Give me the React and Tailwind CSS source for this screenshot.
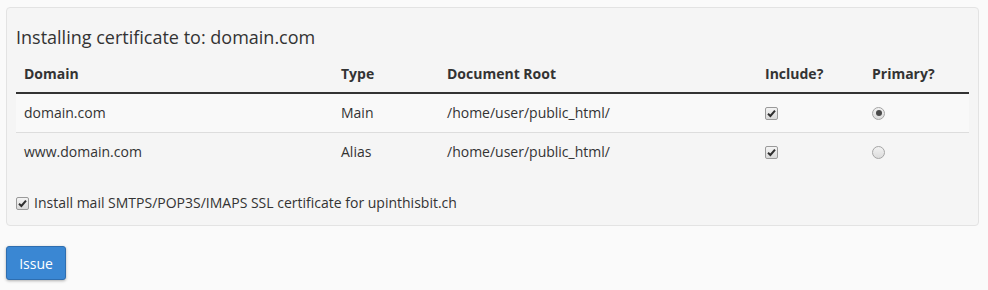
import React from 'react';

const rows = [
  { domain: 'domain.com', type: 'Main', root: '/home/user/public_html/', primary: true },
  { domain: 'www.domain.com', type: 'Alias', root: '/home/user/public_html/', primary: false },
];

function CheckBox() {
  return (
    <span className="inline-flex h-[13px] w-[13px] items-center justify-center rounded-[2px] border border-[#9a9a9a] bg-gradient-to-b from-[#f4f4f4] to-[#d9d9d9]">
      <svg width="9" height="9" viewBox="0 0 9 9">
        <path d="M1 4.8 L3.4 7 L8 1.6" fill="none" stroke="#2f2f2f" strokeWidth="2" />
      </svg>
    </span>
  );
}

function Radio({ checked }) {
  return (
    <span className="inline-flex h-[13px] w-[13px] items-center justify-center rounded-full border border-[#a5a5a5] bg-gradient-to-b from-[#f2f2f2] to-[#dcdcdc]">
      {checked && <span className="h-[6px] w-[6px] rounded-full bg-[#4a4a4a]"></span>}
    </span>
  );
}

export default function App() {
  const cols = 'grid grid-cols-[317px_106px_318px_107px_106px]';
  return (
    <div
      className="h-[290px] bg-[#fafafa] px-[6px] pt-[7px] text-[14px] text-[#333]"
      style={{ fontFamily: '"Open Sans", "Liberation Sans", sans-serif' }}
    >
      <div className="w-[973px] rounded-[4px] border border-[#e3e3e3] bg-[#f5f5f5] px-[9px] pt-[19px] pb-[12px]">
        <h3 className="mb-[9px] text-[18px] leading-[20px] font-normal">
          Installing certificate to: domain.com
        </h3>

        {/* table */}
        <div className={`${cols} border-b-2 border-[#333] font-bold leading-[20px]`}>
          <div className="p-2">Domain</div>
          <div className="p-2">Type</div>
          <div className="p-2">Document Root</div>
          <div className="p-2">Include?</div>
          <div className="p-2">Primary?</div>
        </div>
        {rows.map((r, i) => (
          <div
            key={r.domain}
            className={`${cols} h-[38px] items-center leading-[20px] ${
              i === 0 ? 'bg-[#f9f9f9] border-b border-[#dddddd] box-content' : ''
            }`}
          >
            <div className="px-2">{r.domain}</div>
            <div className="px-2">{r.type}</div>
            <div className="px-2">{r.root}</div>
            <div className="flex px-2">
              <CheckBox />
            </div>
            <div className="flex px-2">
              <Radio checked={r.primary} />
            </div>
          </div>
        ))}

        <div className="mt-[22px] flex h-[20px] items-center gap-[5px] leading-[20px]">
          <CheckBox />
          <span>Install mail SMTPS/POP3S/IMAPS SSL certificate for upinthisbit.ch</span>
        </div>
      </div>

      <button className="mt-[20px] h-[34px] w-[60px] rounded-[3px] border border-[#2e6eb0] bg-[#3a87d3] text-[14px] text-white shadow-[0_1px_3px_rgba(0,0,0,0.3)]">
        Issue
      </button>
    </div>
  );
}
